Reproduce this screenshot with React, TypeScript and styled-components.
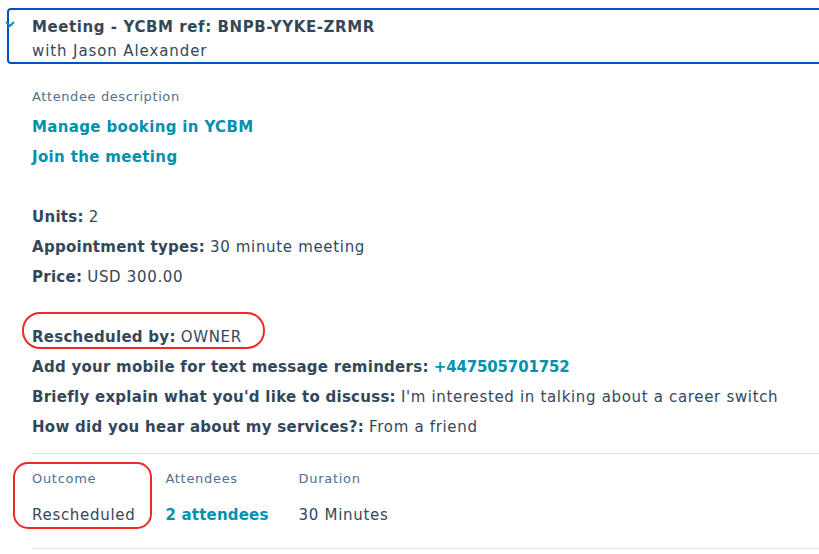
import React from "react";
import styled, { createGlobalStyle } from "styled-components";

const Global = createGlobalStyle`
  html, body { margin: 0; padding: 0; background: #ffffff; overflow: hidden; }
  body { font-family: "DejaVu Sans", "Noto Sans", sans-serif; color: #33475b; }
`;

const Page = styled.div`
  position: relative;
  width: 819px;
  height: 554px;
  overflow: hidden;
  padding-top: 8px;
  box-sizing: border-box;
`;

const HeaderBox = styled.div`
  position: relative;
  box-sizing: border-box;
  height: 56px;
  margin-left: 7px;
  margin-right: -12px;
  border: 2px solid #0052c2;
  border-radius: 4px;
  padding: 5px 0 0 23px;
`;

const Chevron = styled.svg`
  position: absolute;
  left: -4px;
  top: 10px;
`;

const Title = styled.div`
  font-size: 15px;
  font-weight: 700;
  line-height: 24px;
  letter-spacing: 0.58px;
  color: #33475b;
  white-space: nowrap;
`;

const Subtitle = styled.div`
  font-size: 15px;
  line-height: 24px;
  letter-spacing: 0.9px;
  color: #33475b;
`;

const Body = styled.div`
  position: relative;
  margin-top: 18px;
  padding-left: 32px;
`;

const Label = styled.div`
  font-size: 13px;
  line-height: 30px;
  color: #516f90;
  letter-spacing: 0.6px;
`;

const Line = styled.div`
  font-size: 15px;
  line-height: 30px;
  letter-spacing: 0.27px;
  color: #33475b;
  white-space: nowrap;
  min-height: 30px;
`;

const Strong = styled.span`
  font-weight: 700;
`;

const Plain = styled.span`
  letter-spacing: 0.67px;
`;

const Link = styled.a<{ $block?: boolean; $spacing?: number }>`
  display: ${(p) => (p.$block ? "block" : "inline")};
  font-weight: 700;
  color: #0091ae;
  text-decoration: none;
  font-size: 15px;
  line-height: 30px;
  letter-spacing: ${(p) => p.$spacing ?? 0.35}px;
`;

const Divider = styled.div<{ $top?: number }>`
  height: 1px;
  background: #dfe3eb;
  margin-right: -12px;
  margin-top: ${(p) => p.$top ?? 0}px;
`;

const Stats = styled.div`
  display: flex;
  gap: 30px;
  padding: 13px 0 18px;
`;

const Stat = styled.div`
  display: flex;
  flex-direction: column;
  gap: 9px;
`;

const StatLabel = styled.div`
  font-size: 13px;
  line-height: 24px;
  color: #516f90;
  letter-spacing: 0.7px;
`;

const StatValue = styled.div`
  font-size: 15px;
  line-height: 30px;
  letter-spacing: 0.7px;
  color: #33475b;
`;

const Annotation = styled.div<{ $radius: number }>`
  position: absolute;
  border: 2.5px solid #ee2a24;
  border-radius: ${(p) => p.$radius}px;
  pointer-events: none;
  box-sizing: border-box;
`;

export default function App() {
  return (
    <>
      <Global />
      <Page>
        <HeaderBox>
          <Chevron width="10" height="8" viewBox="0 0 10 8">
            <path d="M1.5 2.5 L5 6 L8.5 2.5" fill="none" stroke="#0091ae" strokeWidth="1.8" strokeLinecap="round" strokeLinejoin="round" />
          </Chevron>
          <Title>Meeting - YCBM ref: BNPB-YYKE-ZRMR</Title>
          <Subtitle>with Jason Alexander</Subtitle>
        </HeaderBox>
        <Body>
          <Label>Attendee description</Label>
          <Link $block href="#">Manage booking in YCBM</Link>
          <Link $block href="#">Join the meeting</Link>
          <Line />
          <Line><Strong>Units:</Strong> <Plain>2</Plain></Line>
          <Line><Strong>Appointment types:</Strong> <Plain>30 minute meeting</Plain></Line>
          <Line><Strong>Price:</Strong> <Plain>USD 300.00</Plain></Line>
          <Line />
          <Line><Strong>Rescheduled by:</Strong> <Plain>OWNER</Plain></Line>
          <Line><Strong>Add your mobile for text message reminders:</Strong> <Link href="#" $spacing={-0.15}>+447505701752</Link></Line>
          <Line><Strong>Briefly explain what you'd like to discuss:</Strong> <Plain>I'm interested in talking about a career switch</Plain></Line>
          <Line><Strong>How did you hear about my services?:</Strong> <Plain>From a friend</Plain></Line>
          <Divider $top={11} />
          <Stats>
            <Stat>
              <StatLabel>Outcome</StatLabel>
              <StatValue>Rescheduled</StatValue>
            </Stat>
            <Stat>
              <StatLabel>Attendees</StatLabel>
              <StatValue><Link href="#" $spacing={0.2}>2 attendees</Link></StatValue>
            </Stat>
            <Stat>
              <StatLabel>Duration</StatLabel>
              <StatValue>30 Minutes</StatValue>
            </Stat>
          </Stats>
          <Divider />
          <Annotation $radius={18} style={{ left: 22, top: 230, width: 243, height: 37 }} />
          <Annotation $radius={15} style={{ left: 13, top: 380, width: 139, height: 67 }} />
        </Body>
      </Page>
    </>
  );
}
